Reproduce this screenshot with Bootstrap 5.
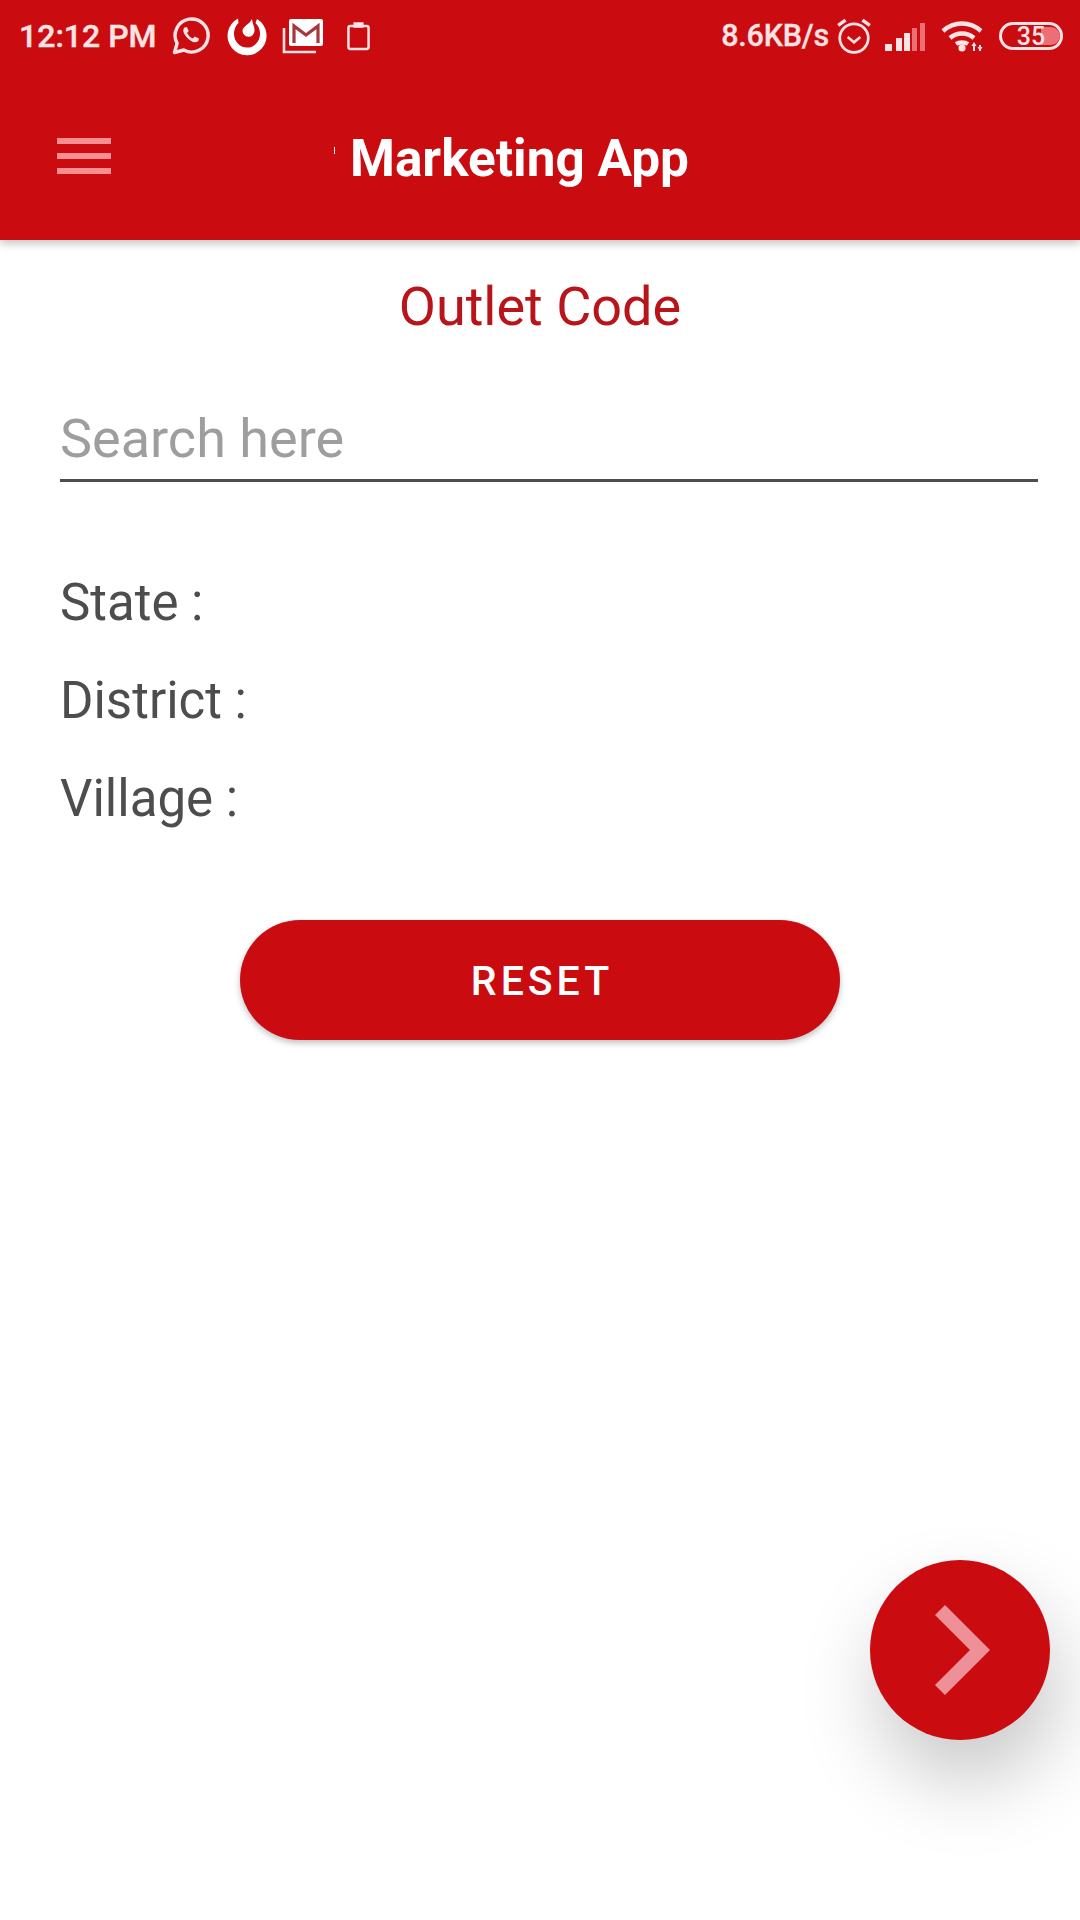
<!doctype html>
<html lang="en">
<head>
<meta charset="utf-8">
<title>Marketing App</title>
<link href="https://cdn.jsdelivr.net/npm/bootstrap@5.3.0/dist/css/bootstrap.min.css" rel="stylesheet">
<style>
body { font-family: Roboto, "Liberation Sans", sans-serif; background: #fff; }
.phone { width: 1080px; height: 1920px; overflow: hidden; background: #fff; }
.app-head { background: #ca0b10; box-shadow: 0 4px 8px rgba(0,0,0,.22); }
.status-row { height: 72px; padding: 0 17px 0 19px; color: #fde3e4; }
.status-time { font-size: 32px; font-weight: 500; line-height: 1; width: 153px; -webkit-text-stroke: .4px #fde3e4; }
.status-speed { font-size: 30.5px; font-weight: 500; line-height: 1; letter-spacing: -.2px; -webkit-text-stroke: .3px #fde3e4; }
.icon-whatsapp { margin-left: 0; }
.icon-fit { margin-left: 17px; }
.icon-mail { margin-left: 15px; }
.icon-clip { margin-left: 23px; }
.icon-alarm { margin-left: 6px; }
.icon-signal { margin-left: 12px; }
.icon-wifi { margin-left: 16px; }
.icon-battery { margin-left: 14px; }
.tool-row.navbar { height: 168px; padding: 0 0 0 57px; }
.menu-btn { width: 54px; height: 36px; background: none; border: 0; padding: 0; }
.menu-btn i { display: block; height: 6px; background: #f98e92; }
.app-title { position: relative; margin: 6px 0 0 239px; font-size: 51.3px; font-weight: 700; color: #fff; line-height: 1; }
.app-title::before { content: ""; position: absolute; left: -16px; top: 14px; width: 1px; height: 7px; background: #fff; }
.page-title { font-size: 54px; color: #b9141a; line-height: 1; padding-top: 40px; }
.search-field.form-control { display: block; width: 978px; margin: 75px 0 0 60px; height: 73px; border: 0; border-bottom: 3px solid #4d4d4d; border-radius: 0; padding: 0 0 11px; font-size: 54px; line-height: 1.2; color: #4d4d4d; }
.search-field::placeholder { color: #9e9e9e; opacity: 1; }
.search-field:focus { box-shadow: none; border-color: #4d4d4d; }
.info-list { padding: 72px 0 0 60px; margin: 0; list-style: none; }
.info-list li { height: 98px; font-size: 51px; line-height: 98px; color: #4d4d4d; }
.reset-btn.btn { display: block; width: 600px; height: 120px; margin: 72px auto 0; padding: 4px 0 0 4px; border: 0; border-radius: 60px; background: #ca0b10; color: #fff; font-size: 41px; font-weight: 500; letter-spacing: 4px; box-shadow: 0 3px 6px rgba(0,0,0,.25); }
.fab-btn { position: absolute; left: 870px; top: 1560px; width: 180px; height: 180px; border: 0; padding: 0; border-radius: 50%; background: #ca0b10; box-shadow: 8px 40px 80px rgba(0,0,0,.22); }
</style>
</head>
<body class="m-0">
<div class="phone position-relative">
  <header class="app-head">
    <div class="status-row d-flex align-items-center">
      <span class="status-time">12:12 PM</span>
      <svg class="icon-whatsapp" width="38" height="38" viewBox="0 0 38 38" fill="none" stroke="#fde3e4" stroke-width="3.4"><path d="M2.5 35.5l2.6-9.2A16.5 16.5 0 1 1 11.8 33z" stroke-linejoin="round"/><path d="M12.5 10.5c-2 2-1.5 5.5 2 9.5s7 6 10 5c2-.7 2.6-2.3 2.4-3.6l-4.2-2-1.8 2.1c-2.2-.8-4.6-3-5.8-5.6l1.6-1.8-1.8-4.2z" fill="#fde3e4" stroke="none"/></svg>
      <svg class="icon-fit" width="40" height="40" viewBox="0 0 40 40"><path d="M11 2.5A19.5 19.5 0 1 0 30 3L28.5 7A13 14 0 1 1 11.5 7Z" fill="#fff"/><path d="M25 3c.5 5 3 8 2.500 12A6 6 0 0 1 15.500 14.500C16 10 22 9 25 3z" fill="#fff"/></svg>
      <svg class="icon-mail" width="42" height="36" viewBox="0 0 42 36"><path d="M2 10v24h32" fill="none" stroke="#fde3e4" stroke-width="2.6"/><rect x="7" y="1" width="34" height="27" rx="2" fill="#fff"/><path d="M12 25V8l12 9 12-9v17" fill="none" stroke="#a9363c" stroke-width="3.2"/></svg>
      <svg class="icon-clip" width="23" height="30" viewBox="0 0 24 30" fill="none" stroke="#fde3e4" stroke-width="2.6"><rect x="1.500" y="4.500" width="21" height="24" rx="2"/><path d="M8 5V2h8v3z" fill="#fde3e4"/></svg>
      <span class="status-speed ms-auto">8.6KB/s</span>
      <svg class="icon-alarm" width="38" height="38" viewBox="0 0 36 36" fill="none" stroke="#fde3e4" stroke-width="2.6"><circle cx="18" cy="20" r="13.500"/><path d="M12 19l6 5 6-5" stroke-width="2.400"/><path d="M3 8l7-5M33 8l-7-5" stroke-width="3.200"/></svg>
      <svg class="icon-signal" width="40" height="30" viewBox="0 0 40 30"><rect x="0" y="23" width="7" height="7" fill="#fde3e4"/><rect x="11" y="17" width="6" height="13" fill="#fde3e4"/><rect x="19" y="12" width="6" height="18" fill="#fde3e4"/><rect x="27" y="7" width="5" height="23" fill="#ec6f75"/><rect x="35" y="2" width="5" height="28" fill="#ec6f75"/></svg>
      <svg class="icon-wifi" width="44" height="32" viewBox="0 0 44 32" fill="none" stroke="#fde3e4" stroke-width="4.400"><path d="M2 11c11-10 27-10 38 0"/><path d="M9 18c7-6 17-6 24 0"/><path d="M15 24c3-2 9-2 12 0"/><circle cx="21" cy="28" r="3.600" fill="#fde3e4" stroke="none"/><path d="M33 31v-6M39 31v-6" stroke-width="2"/><path d="M30.500 26l2.500-4 2.500 4zM36.500 27l2.500 4 2.500-4z" fill="#fde3e4" stroke="none"/></svg>
      <svg class="icon-battery" width="64" height="30" viewBox="0 0 64 30"><rect x="1.500" y="2.500" width="61" height="25" rx="12.500" fill="none" stroke="#fde3e4" stroke-width="3"/><path d="M42 6h10a9 9 0 0 1 0 18H42z" fill="#ec6f75"/><text x="32" y="24" text-anchor="middle" font-family="Roboto, sans-serif" font-size="25" font-weight="500" fill="#fde3e4">35</text></svg>
    </div>
    <nav class="tool-row navbar flex-nowrap justify-content-start align-items-center">
      <button class="menu-btn d-flex flex-column justify-content-between" type="button" aria-label="Menu"><i></i><i></i><i></i></button>
      <span class="app-title">Marketing App</span>
    </nav>
  </header>
  <main>
    <h1 class="page-title text-center fw-normal mb-0">Outlet Code</h1>
    <input class="search-field form-control" type="text" placeholder="Search here">
    <ul class="info-list">
      <li>State :</li>
      <li>District :</li>
      <li>Village :</li>
    </ul>
    <button class="reset-btn btn" type="button">RESET</button>
  </main>
  <button class="fab-btn" type="button" aria-label="Next">
    <svg class="d-block" width="180" height="180" viewBox="0 0 180 180"><path d="M75 45l45 45-45 45-10-10 35-35-35-35z" fill="#ee9097"/></svg>
  </button>
</div>
<script src="https://cdn.jsdelivr.net/npm/bootstrap@5.3.0/dist/js/bootstrap.bundle.min.js"></script>
</body>
</html>
